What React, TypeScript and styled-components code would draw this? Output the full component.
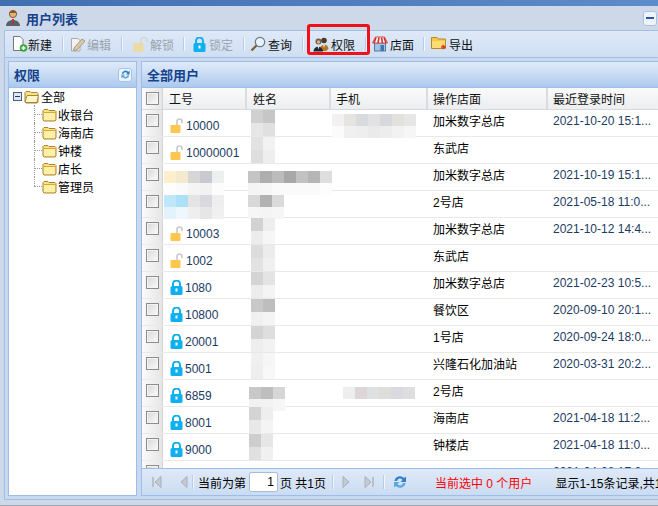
import styled, { createGlobalStyle } from 'styled-components';

const GlobalStyle = createGlobalStyle`
	html, body {
		margin: 0;
		padding: 0;
		background: #c6d5ea;
	}
	* {
		box-sizing: border-box;
	}
`;

const Page = styled.div`
	position: relative;
	width: 658px;
	height: 506px;
	overflow: hidden;
	display: flex;
	flex-direction: column;
	font-family: 'Liberation Sans', 'Noto Sans CJK SC', sans-serif;
	font-size: 12px;
	color: #000;
	background: #cdd8e8;
	border-bottom: 1px solid #9aa5b5;
`;

const TopStrip = styled.div`
	height: 6px;
	flex: none;
	background: linear-gradient(90deg, #3f6fb0, #5c8ccc);
`;

const TitleBar = styled.div`
	height: 24px;
	flex: none;
	display: flex;
	align-items: center;
	gap: 5px;
	padding: 0 1px 0 5px;
	font-size: 13px;
	font-weight: bold;
	color: #15428b;
`;

const TitleText = styled.span`
	flex: 1;
`;

const Collapse = styled.div`
	width: 14px;
	height: 15px;
	display: flex;
	align-items: center;
	justify-content: center;
	background: #eef4fc;
	border: 1px solid #a9c2e6;
	border-radius: 3px;
	&::after {
		content: '';
		width: 8px;
		height: 2px;
		background: #2f55a8;
	}
`;

const Frame = styled.div`
	flex: 1;
	min-height: 0;
	margin-left: 4px;
	margin-bottom: 5px;
	display: flex;
	flex-direction: column;
	background: #c9d9f0;
	border: 1px solid #a3bfe6;
	border-right: none;
`;

const Toolbar = styled.div`
	height: 27px;
	flex: none;
	display: flex;
	align-items: center;
	background: linear-gradient(#dfe9f7, #cfdff3);
	border-bottom: 1px solid #a3bfe6;
`;

const ToolButton = styled.div<{ $off?: boolean; $width: number; $pad: number; $gap?: number }>`
	width: ${(p) => p.$width}px;
	flex: none;
	display: flex;
	align-items: center;
	gap: ${(p) => p.$gap ?? 1}px;
	padding-left: ${(p) => p.$pad}px;
	white-space: nowrap;
	color: ${(p) => (p.$off ? '#9aa3ad' : '#111')};
`;

const ToolSep = styled.div`
	width: 1px;
	height: 14px;
	flex: none;
	background: #b4cdec;
	box-shadow: 1px 0 0 #f2f7fd;
`;

const Body = styled.div`
	flex: 1;
	min-height: 0;
	display: flex;
	gap: 4px;
	padding: 3px 0 3px 3px;
`;

const PanelHead = styled.div`
	height: 26px;
	flex: none;
	display: flex;
	align-items: center;
	justify-content: space-between;
	padding: 0 4px 0 5px;
	font-weight: bold;
	font-size: 13px;
	color: #15428b;
	background: linear-gradient(#dfeafa, #c8dbf4 50%, #aac9ef);
	border-bottom: 1px solid #9ebde8;
`;

const TreePanel = styled.div`
	width: 129px;
	flex: none;
	display: flex;
	flex-direction: column;
	border: 1px solid #9ebde8;
	background: #fff;
`;

const Refresh = styled.div`
	width: 14px;
	height: 14px;
	display: flex;
	align-items: center;
	justify-content: center;
	background: #eef4fc;
	border: 1px solid #a9c2e6;
	border-radius: 3px;
`;

const Tree = styled.div`
	flex: 1;
`;

const TreeRoot = styled.div`
	height: 17px;
	display: flex;
	align-items: center;
	gap: 2px;
	padding-left: 4px;
`;

const Expander = styled.div`
	width: 9px;
	height: 9px;
	flex: none;
	display: flex;
	align-items: center;
	justify-content: center;
	background: #dfe6ef;
	border: 1px solid #47607f;
	&::after {
		content: '';
		width: 5px;
		height: 1px;
		background: #203a5e;
	}
`;

const TreeChild = styled.div<{ $last?: boolean }>`
	position: relative;
	height: 18px;
	display: flex;
	align-items: center;
	gap: 1px;
	padding-left: 33px;
	&::before {
		content: '';
		position: absolute;
		left: 25px;
		top: 9px;
		width: 8px;
		border-top: 1px dotted #999;
	}
	&::after {
		content: '';
		position: absolute;
		left: 25px;
		top: 0;
		height: ${(p) => (p.$last ? '9px' : '18px')};
		border-left: 1px dotted #999;
	}
`;

const GridPanel = styled.div`
	flex: 1;
	min-width: 0;
	display: flex;
	flex-direction: column;
	border: 1px solid #9ebde8;
	border-right: none;
	background: #fff;
`;

const GridHead = styled.div`
	height: 22px;
	flex: none;
	display: flex;
	background: linear-gradient(#fafafa, #eceef0);
	border-bottom: 1px solid #d8d8d8;
`;

const HeadCell = styled.div<{ $width: number; $pad?: number }>`
	width: ${(p) => p.$width}px;
	flex: none;
	display: flex;
	align-items: center;
	padding-left: ${(p) => p.$pad ?? 5}px;
	border-right: 2px solid #d9dde2;
	color: #111;
`;

const CheckCell = styled.div`
	width: 21px;
	flex: none;
	display: flex;
	justify-content: center;
	padding-top: 4px;
	background: linear-gradient(90deg, #fafafa, #e6e6e6);
	border-right: 1px solid #d5d5d5;
`;

const CheckBox = styled.div`
	width: 13px;
	height: 13px;
	border: 1px solid #8c8c8c;
	background: linear-gradient(135deg, #d8d8d8, #fbfbfb);
	box-shadow: inset 0 0 0 1px #f4f4f4;
`;

const GridRows = styled.div`
	flex: 1;
	min-height: 0;
	overflow: hidden;
`;

const Row = styled.div`
	height: 27px;
	display: flex;
	border-bottom: 1px solid #e9e9e9;
`;

const Cell = styled.div<{ $width: number }>`
	position: relative;
	width: ${(p) => p.$width}px;
	flex: none;
	padding: 5px 0 0 5px;
	line-height: 14px;
	white-space: nowrap;
`;

const IdWrap = styled.div`
	display: flex;
	align-items: flex-end;
	gap: 2px;
	height: 18px;
	margin-left: 2px;
	color: #1c3b63;
`;

const DateText = styled.span`
	color: #1c3b63;
	position: relative;
	top: -1px;
`;

const Mosaic = styled.div<{ $left: number; $top: number; $cols: number; $rowHeight: number }>`
	position: absolute;
	left: ${(p) => p.$left}px;
	top: ${(p) => p.$top}px;
	display: grid;
	grid-template-columns: repeat(${(p) => p.$cols}, 12px);
	grid-auto-rows: ${(p) => p.$rowHeight}px;
`;

const Tile = styled.div<{ $color: string }>`
	background: ${(p) => p.$color};
`;

const Pager = styled.div`
	height: 27px;
	flex: none;
	display: flex;
	align-items: center;
	padding-left: 8px;
	white-space: nowrap;
	background: linear-gradient(#dfe9f7, #cbdcf2);
	border-top: 1px solid #9ebde8;
	overflow: hidden;
	& > * {
		flex: none;
	}
`;

const PagerSep = styled.div<{ $left: number; $right: number }>`
	width: 1px;
	height: 14px;
	margin: 0 ${(p) => p.$right}px 0 ${(p) => p.$left}px;
	background: #b4cdec;
	box-shadow: 1px 0 0 #f2f7fd;
`;

const ArrowBox = styled.svg<{ $after: number }>`
	margin-right: ${(p) => p.$after}px;
`;

const PageInput = styled.div`
	width: 29px;
	height: 20px;
	margin: 0 2px 0 3px;
	padding-right: 3px;
	line-height: 18px;
	text-align: right;
	background: #fff;
	border: 1px solid #a9bdd6;
	border-radius: 2px;
`;

const SelectedText = styled.span`
	margin-left: 27px;
	color: #f00;
`;

const RangeText = styled.span`
	margin-left: 23px;
`;

const Highlight = styled.div`
	position: absolute;
	left: 307px;
	top: 24px;
	width: 63px;
	height: 31px;
	border: 3px solid #f01018;
	border-radius: 3px;
`;

function Folder({ open }: { open?: boolean }) {
	return (
		<svg width="15" height="15" viewBox="0 0 15 15">
			<path d="M1 3.5 L2 2.5 H6 L7 3.5 H13 L14 4.5 V13 L13 14 H2 L1 13 Z" fill="#fbe27c" stroke="#a9853a" />
			<path d="M2 6 H13 V13 H2 Z" fill="#fff0a8" />
			{open && <path d="M1 13 L3 6.5 H14.5 L13 13.5 H2 Z" fill="#fff6c8" stroke="#a9853a" />}
			{!open && <path d="M1.5 5.5 H13.5" stroke="#d7a93d" />}
		</svg>
	);
}

function Lock({ open }: { open?: boolean }) {
	if (open) {
		return (
			<svg width="14" height="15" viewBox="0 0 14 15">
				<path d="M7 7 V3.5 a2.5 2.5 0 0 1 5 0 V5" fill="none" stroke="#c9c9c9" strokeWidth="1.6" />
				<rect x="0.5" y="7" width="10" height="8" rx="1" fill="#fdc64e" />
			</svg>
		);
	}
	return (
		<svg width="13" height="15" viewBox="0 0 13 15">
			<path d="M3 7 V4 a3.5 3.5 0 0 1 7 0 V7" fill="none" stroke="#0fb0f0" strokeWidth="2" />
			<rect x="0.5" y="6" width="12" height="9" rx="1.5" fill="#0fb0f0" />
			<rect x="5.5" y="8.5" width="2" height="3" fill="#fff" />
		</svg>
	);
}

function NewIcon() {
	return (
		<svg width="16" height="16" viewBox="0 0 16 16">
			<path d="M1.5 0.5 H8 L11 3.5 V14.5 H1.5 Z" fill="#fff" stroke="#777" />
			<circle cx="11.5" cy="12" r="3.8" fill="#3aa83a" />
			<path d="M9.5 12 H13.5 M11.5 10 V14" stroke="#fff" strokeWidth="1.4" />
		</svg>
	);
}

function EditIcon() {
	return (
		<svg width="16" height="16" viewBox="0 0 16 16">
			<path d="M1.5 2.5 H8 L10 4.5 V15 H1.5 Z" fill="#f2f2f2" stroke="#aaa" />
			<path d="M4 12 L12 3 L15 5 L7 14 L3.5 14.5 Z" fill="#d9c9a6" stroke="#a59a85" />
		</svg>
	);
}

function UnlockIcon() {
	return (
		<svg width="16" height="15" viewBox="0 0 16 15">
			<path d="M8 7 V3.5 a3 3 0 0 1 6 0 V5" fill="none" stroke="#d6d6d6" strokeWidth="1.6" />
			<rect x="0.5" y="6" width="10" height="9" fill="#ecd9a4" />
		</svg>
	);
}

function SearchIcon() {
	return (
		<svg width="16" height="16" viewBox="0 0 16 16">
			<circle cx="10" cy="6" r="4.7" fill="#e6f1fb" stroke="#6a7a88" strokeWidth="1.2" />
			<path d="M6.5 9.5 L1.5 14.5" stroke="#7b5a2e" strokeWidth="2.2" />
		</svg>
	);
}

function UsersIcon() {
	return (
		<svg width="16" height="16" viewBox="0 0 16 16">
			<circle cx="11" cy="4.5" r="2.8" fill="#4a3a2c" />
			<path d="M7 13 C7 7.5 15.5 7 15.5 13 L13 15 H8 Z" fill="#b8741f" />
			<path d="M10 9 H12 L11 12 Z" fill="#f2dca8" />
			<circle cx="5.5" cy="5.5" r="3" fill="#6a5a48" />
			<circle cx="5.5" cy="6" r="1.7" fill="#d8b48c" />
			<path d="M0.5 15.5 C0.5 9 10 9 10 15.5 Z" fill="#23262c" />
			<path d="M4.5 10 H6.5 L5.5 13.5 Z" fill="#e8e8e8" />
		</svg>
	);
}

function StoreIcon() {
	return (
		<svg width="16" height="16" viewBox="0 0 16 16">
			<rect x="2.5" y="7" width="11" height="8" fill="#9fc3e6" stroke="#5b7a99" />
			<rect x="8.5" y="9" width="3.5" height="6" fill="#3f78ad" />
			<path d="M3.5 1 H12.5 L15.5 7 H0.5 Z" fill="#fff" stroke="#c8504a" />
			<path d="M4 1.5 L2 7 M7 1.5 L6 7 M9.5 1.5 L10.5 7 M12 1.5 L14 7" stroke="#d8302c" strokeWidth="1.6" />
		</svg>
	);
}

function ExportIcon() {
	return (
		<svg width="16" height="16" viewBox="0 0 16 16">
			<path d="M0.5 1.5 H6 L7 3 H14.5 V12.5 H0.5 Z" fill="#f6c941" stroke="#b28a26" />
			<path d="M1 5 H14 V12 H1 Z" fill="#fbdc72" />
			<path d="M10 11 H13 M11.5 9 L14 11 L11.5 13" stroke="#e0352b" strokeWidth="1.4" fill="none" />
		</svg>
	);
}

function SyncIcon({ size }: { size: number }) {
	return (
		<svg width={size} height={size} viewBox="0 0 16 16">
			<path d="M2.5 7 A5.5 5.5 0 0 1 12 4 L14 2.5 V8 H8.5 L10.5 6 A3 3 0 0 0 5 7 Z" fill="#2f7fc8" />
			<path d="M13.5 9 A5.5 5.5 0 0 1 4 12 L2 13.5 V8 H7.5 L5.5 10 A3 3 0 0 0 11 9 Z" fill="#5aa7e4" />
		</svg>
	);
}

function PagerArrow({ dir, end, after }: { dir: 'left' | 'right'; end?: boolean; after: number }) {
	return (
		<ArrowBox width="14" height="14" viewBox="0 0 14 14" $after={after}>
			<g transform={dir === 'right' ? 'matrix(-1 0 0 1 14 0)' : undefined}>
				{end && <rect x="2" y="2" width="2" height="10" fill="#b9c0c9" />}
				<path d="M11 1.5 V12.5 L5 7 Z" fill="#c4cad2" stroke="#a8afb8" />
			</g>
		</ArrowBox>
	);
}

type Blur = { left: number; top: number; cols: number; rowHeight: number; tiles: string[] };

type UserRow = {
	id?: string;
	locked?: boolean;
	store?: string;
	date?: string;
	idBlur?: Blur;
	nameBlur?: Blur;
	phoneBlur?: Blur;
};

const col = (left: number, tiles: string[]): Blur => ({ left, top: 0, cols: 2, rowHeight: 13, tiles });

const patch = (left: number, top: number, cols: number, tiles: string[]): Blur => ({
	left,
	top,
	cols,
	rowHeight: 12,
	tiles
});

const users: UserRow[] = [
	{
		id: '10000',
		store: '加米数字总店',
		date: '2021-10-20 15:1...',
		nameBlur: col(4, ['#d0d0d0', '#c6c6c6', '#e6e6e6', '#e0e0e0']),
		phoneBlur: patch(1, 4, 7, ['#f1f1f1', '#e6e4e0', '#d9dadd', '#e2e2e4', '#d6d8dc', '#e2e1dd', '#e6e6e6', '#fbfbfb', '#f0f0f0', '#eeeeee', '#eaeaea', '#ededed', '#f2f2f2', '#f6f6f6'])
	},
	{
		id: '10000001',
		store: '东武店',
		nameBlur: col(4, ['#e2e2e2', '#f2f2f2', '#dedede', '#eeeeee'])
	},
	{
		store: '加米数字总店',
		date: '2021-10-19 15:1...',
		idBlur: patch(1, 7, 5, ['#fdefcc', '#f4ead0', '#d6d6d6', '#c9c9d0', '#ecefee', '#fdfdfd', '#fafafa', '#f4f4f4', '#f2f2f2', '#fcfcfc']),
		nameBlur: patch(1, 7, 7, ['#c4c4c4', '#aeaeae', '#bcbcbc', '#a8a8a8', '#c2c2c2', '#b6b6b6', '#dedede', '#f4f4f4', '#f6f6f6', '#fafafa', '#fafafa', '#fafafa', '#fafafa', '#fdfdfd'])
	},
	{
		store: '2号店',
		date: '2021-05-18 11:0...',
		idBlur: patch(1, 4, 5, ['#bfe7fa', '#abe0f6', '#e4e4e4', '#d8d8de', '#eeeeef', '#e2f3fb', '#eef7fb', '#eeeeee', '#e6e6e8', '#f0f0f0']),
		nameBlur: patch(1, 4, 3, ['#d8d8d8', '#b2b2b2', '#dadada', '#f6f6f6', '#f4f4f4', '#f6f6f6'])
	},
	{
		id: '10003',
		store: '加米数字总店',
		date: '2021-10-12 14:4...',
		nameBlur: col(4, ['#d2d2d2', '#eeeeee', '#ececec', '#f6f6f6'])
	},
	{
		id: '1002',
		store: '东武店',
		nameBlur: col(4, ['#dcdcdc', '#ececec', '#e2e2e2', '#f0f0f0'])
	},
	{
		id: '1080',
		locked: true,
		store: '加米数字总店',
		date: '2021-02-23 10:5...',
		nameBlur: col(4, ['#d4d4d4', '#e4e4e4', '#ececec', '#f4f4f4'])
	},
	{
		id: '10800',
		locked: true,
		store: '餐饮区',
		date: '2020-09-10 20:1...',
		nameBlur: col(4, ['#c8c8c8', '#bebebe', '#f0f0f0', '#f4f4f4'])
	},
	{
		id: '20001',
		locked: true,
		store: '1号店',
		date: '2020-09-24 18:0...',
		nameBlur: col(4, ['#d4d4d4', '#dedede', '#eeeeee', '#f2f2f2'])
	},
	{
		id: '5001',
		locked: true,
		store: '兴隆石化加油站',
		date: '2020-03-31 20:2...',
		nameBlur: col(4, ['#f0f0f0', '#f6f6f6', '#eeeeee', '#f8f8f8'])
	},
	{
		id: '6859',
		locked: true,
		store: '2号店',
		nameBlur: patch(2, 7, 3, ['#c8c8c8', '#bebebe', '#d6d6d6', '#f2f2f2', '#f2f2f2', '#f6f6f6']),
		phoneBlur: patch(12, 7, 6, ['#eeeeee', '#dcd6d9', '#dfe0e1', '#ddddd9', '#d9d9df', '#dedede'])
	},
	{
		id: '8001',
		locked: true,
		store: '海南店',
		date: '2021-04-18 11:2...',
		nameBlur: col(2, ['#d4d4d4', '#eeeeee', '#e8e8e8', '#f4f4f4'])
	},
	{
		id: '9000',
		locked: true,
		store: '钟楼店',
		date: '2021-04-18 11:0...',
		nameBlur: col(2, ['#cdcdcd', '#e6e6e6', '#e0e0e0', '#f0f0f0'])
	},
	{ id: '1001', locked: true, store: '1001', date: '2021-04-08 17:2...' }
];

const treeItems = ['收银台', '海南店', '钟楼', '店长', '管理员'];

function Tiles({ blur }: { blur: Blur }) {
	return (
		<Mosaic $left={blur.left} $top={blur.top} $cols={blur.cols} $rowHeight={blur.rowHeight}>
			{blur.tiles.map((color, index) => (
				<Tile key={index} $color={color} />
			))}
		</Mosaic>
	);
}

function App() {
	return (
		<Page>
			<GlobalStyle />
			<TopStrip />
			<TitleBar>
				<svg width="16" height="18" viewBox="0 0 16 18">
					<circle cx="8" cy="5" r="3.6" fill="#e3b27c" stroke="#8a5a2c" />
					<path d="M4.5 4 C5 1 11 1 11.5 4 Z" fill="#8a5a1c" />
					<path d="M1 17 C1 9 15 9 15 17 Z" fill="#5c6066" />
					<path d="M7 10 H9 L8.6 15 H7.4 Z" fill="#c0302c" />
				</svg>
				<TitleText>用户列表</TitleText>
				<Collapse />
			</TitleBar>
			<Frame>
				<Toolbar>
					<ToolButton $width={57} $pad={7} $gap={0}><NewIcon />新建</ToolButton>
					<ToolSep />
					<ToolButton $off $width={58} $pad={7}><EditIcon />编辑</ToolButton>
					<ToolSep />
					<ToolButton $off $width={61} $pad={11}><UnlockIcon />解锁</ToolButton>
					<ToolSep />
					<ToolButton $off $width={59} $pad={9} $gap={3}><Lock />锁定</ToolButton>
					<ToolSep />
					<ToolButton $width={58} $pad={6} $gap={2}><SearchIcon />查询</ToolButton>
					<ToolSep />
					<ToolButton $width={62} $pad={10} $gap={2}><UsersIcon />权限</ToolButton>
					<ToolSep />
					<ToolButton $width={57} $pad={6} $gap={2}><StoreIcon />店面</ToolButton>
					<ToolSep />
					<ToolButton $width={70} $pad={7} $gap={2}><ExportIcon />导出</ToolButton>
				</Toolbar>
				<Body>
					<TreePanel>
						<PanelHead>
							权限
							<Refresh><SyncIcon size={11} /></Refresh>
						</PanelHead>
						<Tree>
							<TreeRoot>
								<Expander />
								<Folder open />
								全部
							</TreeRoot>
							{treeItems.map((item, index) => (
								<TreeChild key={item} $last={index === treeItems.length - 1}>
									<Folder />
									{item}
								</TreeChild>
							))}
						</Tree>
					</TreePanel>
					<GridPanel>
						<PanelHead>全部用户</PanelHead>
						<GridHead>
							<CheckCell><CheckBox /></CheckCell>
							<HeadCell $width={84} $pad={6}>工号</HeadCell>
							<HeadCell $width={84} $pad={6}>姓名</HeadCell>
							<HeadCell $width={97}>手机</HeadCell>
							<HeadCell $width={120}>操作店面</HeadCell>
							<HeadCell $width={120}>最近登录时间</HeadCell>
						</GridHead>
						<GridRows>
							{users.map((user, index) => (
								<Row key={index}>
									<CheckCell><CheckBox /></CheckCell>
									<Cell $width={84}>
										{user.id && (
											<IdWrap>
												<Lock open={!user.locked} />
												{user.id}
											</IdWrap>
										)}
										{user.idBlur && <Tiles blur={user.idBlur} />}
									</Cell>
									<Cell $width={84}>{user.nameBlur && <Tiles blur={user.nameBlur} />}</Cell>
									<Cell $width={97}>{user.phoneBlur && <Tiles blur={user.phoneBlur} />}</Cell>
									<Cell $width={120}>{user.store}</Cell>
									<Cell $width={120}><DateText>{user.date}</DateText></Cell>
								</Row>
							))}
						</GridRows>
						<Pager>
							<PagerArrow dir="left" end after={12} />
							<PagerArrow dir="left" after={0} />
							<PagerSep $left={2} $right={5} />
							<span>当前为第</span>
							<PageInput>1</PageInput>
							<span>页 共1页</span>
							<PagerSep $left={6} $right={7} />
							<PagerArrow dir="right" after={8} />
							<PagerArrow dir="right" end after={0} />
							<PagerSep $left={7} $right={8} />
							<SyncIcon size={16} />
							<SelectedText>当前选中 0 个用户</SelectedText>
							<RangeText>显示1-15条记录,共15条</RangeText>
						</Pager>
					</GridPanel>
				</Body>
			</Frame>
			<Highlight />
		</Page>
	);
}

export default App;
